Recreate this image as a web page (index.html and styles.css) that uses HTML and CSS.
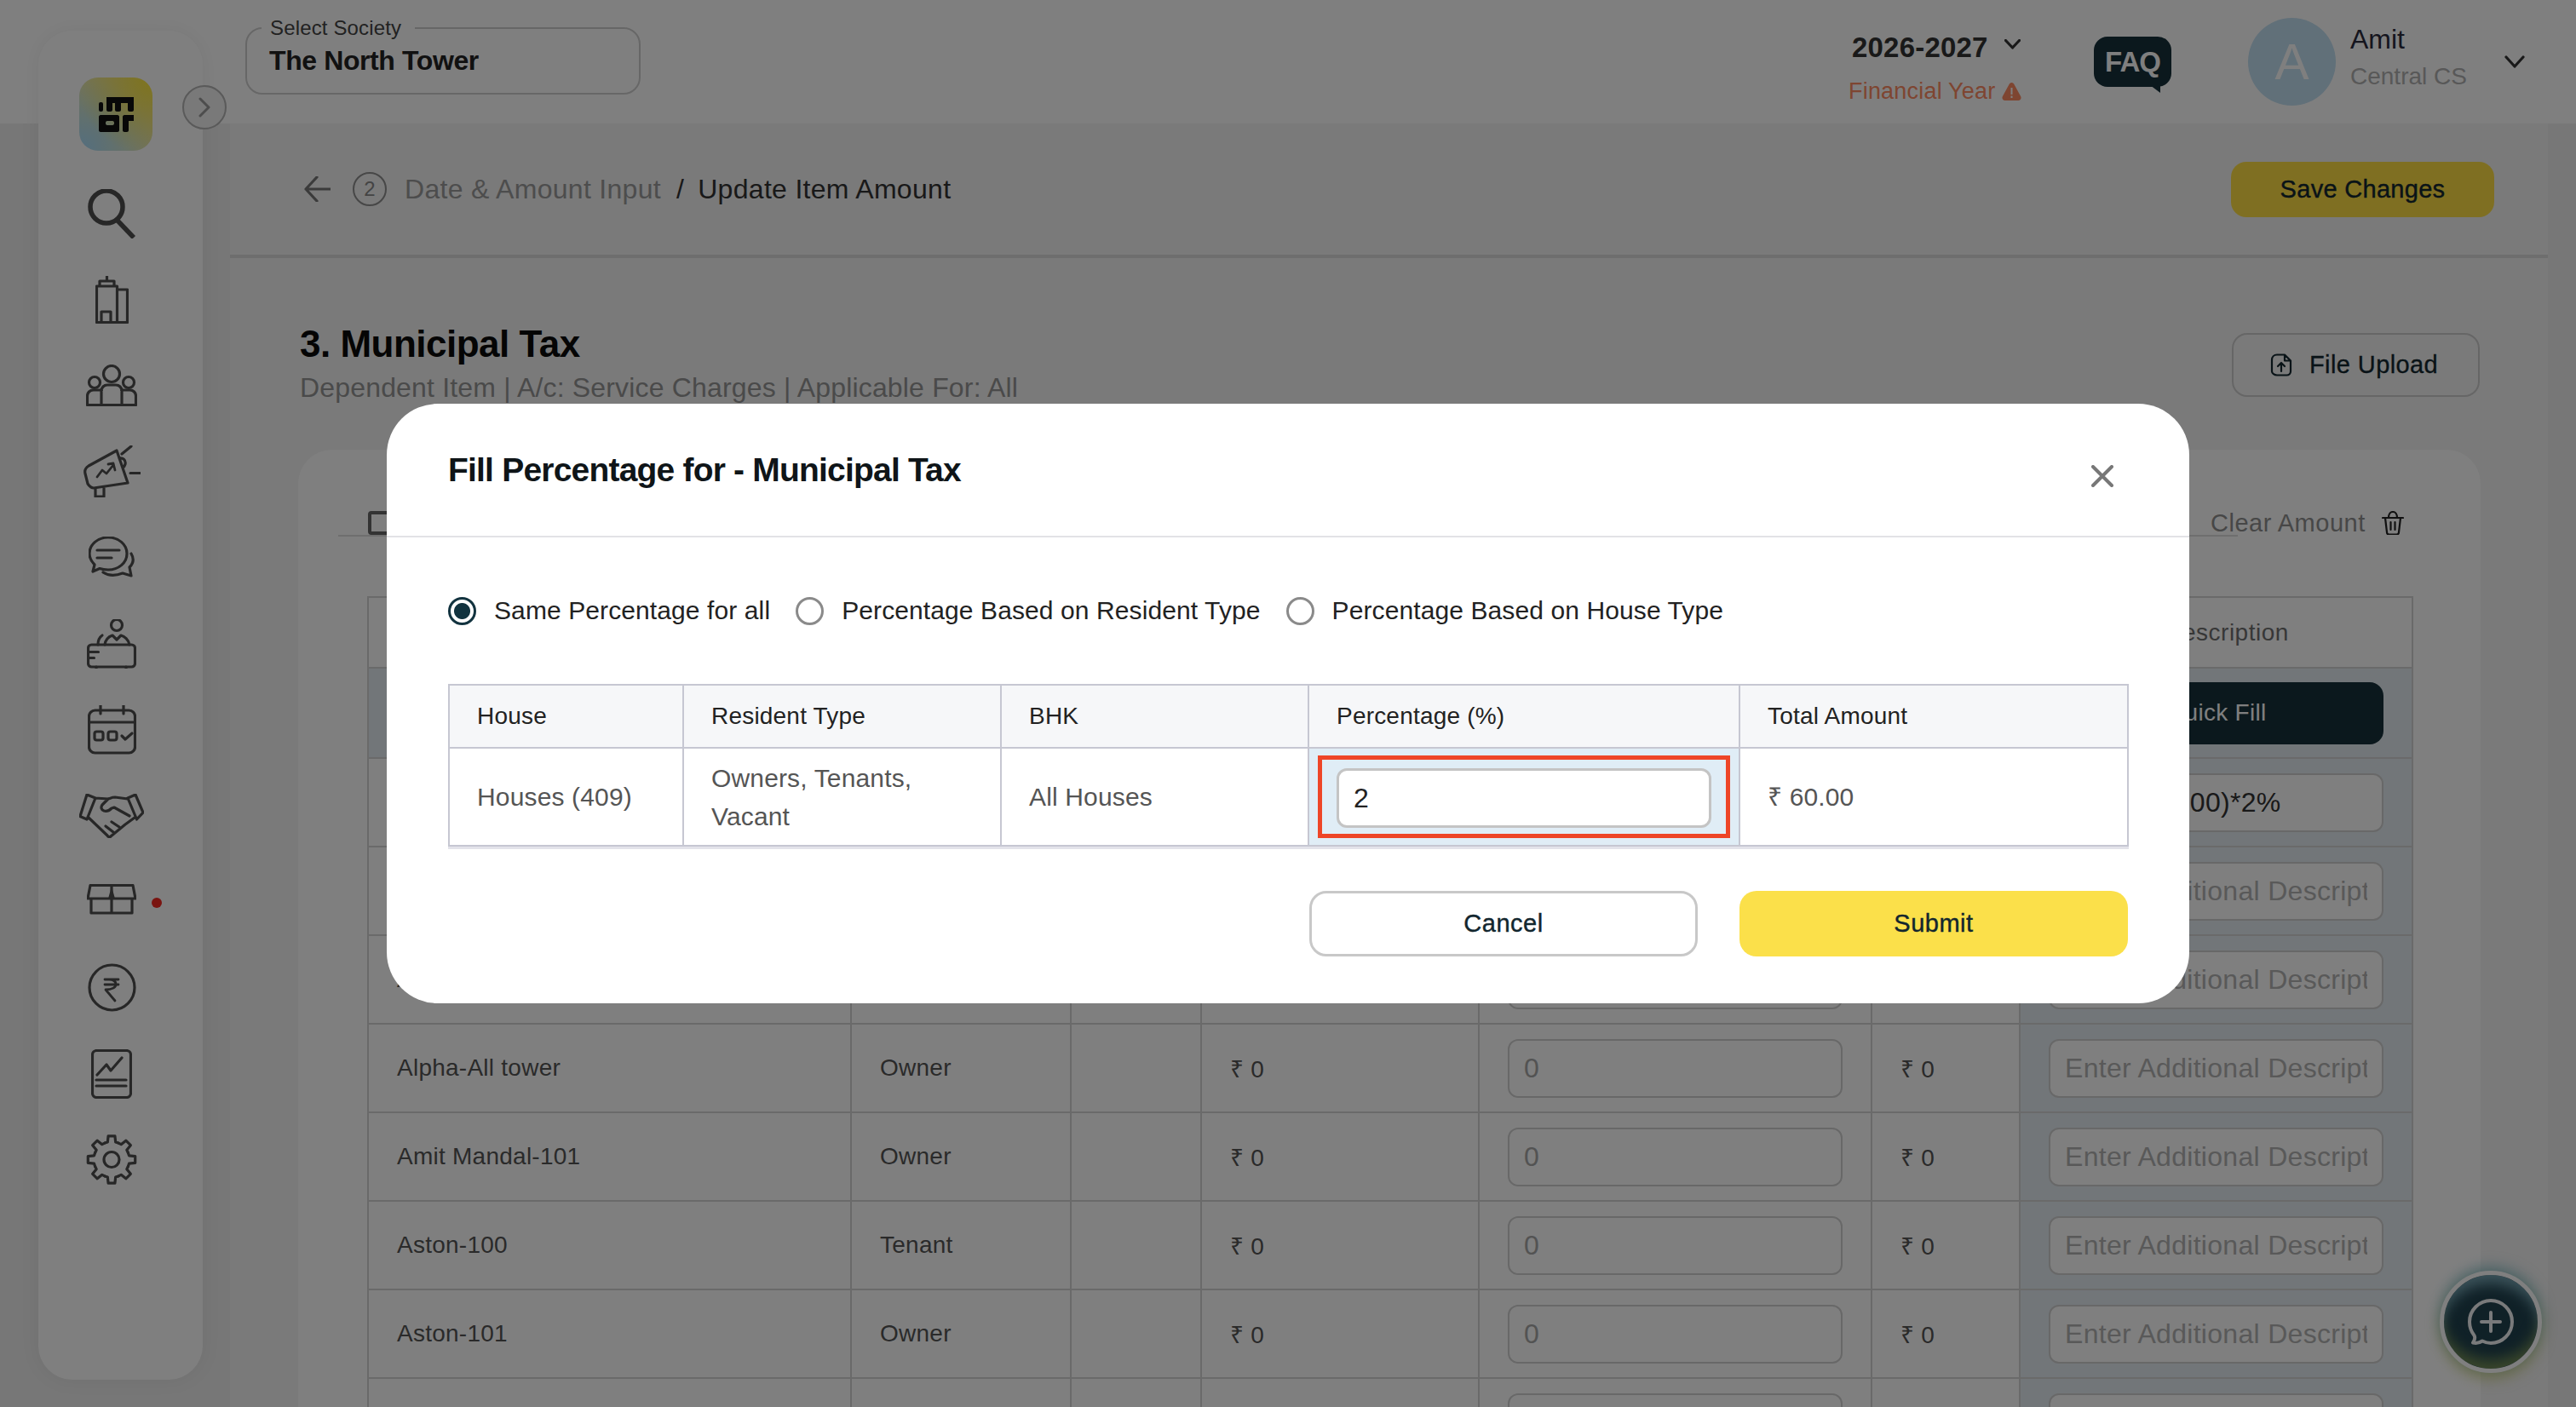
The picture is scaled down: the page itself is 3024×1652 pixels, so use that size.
FILE: index.html
```html
<!DOCTYPE html>
<html lang="en">
<head>
  <meta charset="UTF-8" />
  <title>Update Item Amount</title>
  <link rel="stylesheet" href="styles.css">
</head>
<body>

<div class="app">

  <!-- Top bar -->
  <header class="topbar">
    <fieldset class="society">
      <legend>Select Society</legend>
      <div class="society-name">The North Tower</div>
    </fieldset>

    <div class="year">
      <div class="year-row">
        <span class="year-value">2026-2027</span>
        <svg class="ico year-caret" width="19" height="12" viewBox="0 0 19 12"><path d="M1.500 1.500l8 8.500 8-8.500"/></svg>
      </div>
      <div class="year-note">
        <span>Financial Year</span>
        <svg width="23" height="21" viewBox="0 0 23 21"><path class="warn" d="M11.500 0c1.500 0 2.500 1 3.200 2.400l7.500 13.800c1 2.200-.2 4.800-3 4.800H3.800c-2.800 0-4-2.600-3-4.800L8.300 2.400C9 1 10 0 11.500 0z"/><path class="warn-mark" d="M10.500 6h2v8h-2zM10.500 15.500h2v2.500h-2z"/></svg>
      </div>
    </div>

    <div class="faq">FAQ</div>

    <div class="user">
      <div class="avatar">A</div>
      <div class="user-text">
        <div class="user-name">Amit</div>
        <div class="user-org">Central CS</div>
      </div>
      <svg class="ico user-caret" width="24" height="15" viewBox="0 0 24 15"><path d="M2 2l10 11L22 2"/></svg>
    </div>
  </header>

  <!-- Side rail -->
  <aside class="rail">
    <div class="logo">
      <svg width="41" height="41" viewBox="0 0 41 41">
        <rect x="0" y="6" width="5" height="11" rx="2"/>
        <path d="M9 0h32v15c0 1-1 2-2 2h-3c-1 0-2-1-2-2V7h-8v8c0 1-1 2-2 2h-3c-1 0-2-1-2-2V7h-3v8c0 1-1 2-2 2h-3c-1 0-2-1-2-2z"/>
        <path fill-rule="evenodd" d="M2 21h20c1 0 2 1 2 2v16c0 1-1 2-2 2H2c-1 0-2-1-2-2V23c0-1 1-2 2-2zM10 28c-1.500 0-2 1-2 2.500S8.500 33 10 33h6c1.500 0 2-1 2-2.500S17.500 28 16 28z"/>
        <path d="M30 21h11v7h-6v11c0 1-1 2-2 2h-3c-1 0-2-1-2-2V23c0-1 1-2 2-2z"/>
      </svg>
    </div>
    <button class="rail-toggle">
      <svg class="ico thin" width="15" height="24" viewBox="0 0 15 24"><path d="M2 2l10 10L2 22"/></svg>
    </button>

    <nav class="rail-nav">
      <a class="rail-item">
        <svg class="ico" width="57" height="58" viewBox="0 0 57 58"><circle class="heavy" cx="22" cy="21" r="19"/><path class="heavy" d="M35 37l19 20"/></svg>
      </a>
      <a class="rail-item">
        <svg class="ico" width="39" height="56" viewBox="0 0 39 56"><path d="M1.500 54.500V12h24v42.500M1.500 54.500h36V16h-12M5 12V6h17v6M13.500 0v6M7 54v-12h11v12"/></svg>
      </a>
      <a class="rail-item">
        <svg class="ico" width="60" height="49" viewBox="0 0 60 49"><circle cx="30" cy="11" r="9.500"/><circle cx="10" cy="21" r="6.500"/><circle cx="50" cy="21" r="6.500"/><path d="M1.500 47.500V37c0-4 3-7 7-7h10M58.500 47.500V37c0-4-3-7-7-7h-10M18 47.500V31c0-4 3-7 7-7h10c4 0 7 3 7 7v16.500M1.500 47.500h57"/></svg>
      </a>
      <a class="rail-item">
        <svg class="ico" width="67" height="61" viewBox="0 0 67 61"><path d="M39 6l13 38-40 6c-3 0-5-2-7-5l-3-12c-1-4 1-7 4-9zM14 50v10h10v-10M42 15c4-1 8 2 7 7-.5 2-1 3-3 4M45 10l11-9M55 32.500h12"/><path class="fine" d="M16 37l6-8 5 4 8-10M29 22l6-1 2 8"/></svg>
      </a>
      <a class="rail-item nudge-down">
        <svg class="ico" width="55" height="53" viewBox="0 0 55 53"><path d="M7 33c-4-4-6-8-6-13C1 9 11 1 23 1s22 8 22 19-10 19-22 19c-3 0-7-.5-10-1.500L5 41zM50 20c3 5 3 11-2 16l2 10-10-3c-8 3-17 3-23-1"/><path d="M10 16h26M10 25h17"/></svg>
      </a>
      <a class="rail-item">
        <svg class="ico" width="58" height="58" viewBox="0 0 58 58"><circle cx="35" cy="7" r="6.500"/><path d="M21 30c1-7 6-10 9-11l5 5 5-5c4 1 9 5 10 11M13 30c0-6 2-9 5-11"/><rect x="1.500" y="30" width="55" height="26" rx="4"/><path d="M1.500 38.500h12M1.500 45.500h7M11 56v2M46 56v2"/></svg>
      </a>
      <a class="rail-item">
        <svg class="ico" width="57" height="58" viewBox="0 0 57 58"><rect x="1.500" y="6" width="54" height="50" rx="7"/><path d="M1.500 20h54M15 0v10M42 0v10"/><rect x="8" y="31" width="10" height="10" rx="2.500"/><rect x="24" y="31" width="10" height="10" rx="2.500"/><path d="M40 36l4 4 8-7"/></svg>
      </a>
      <a class="rail-item">
        <svg class="ico" width="76" height="52" viewBox="0 0 76 52"><path d="M9 1l10 4-10 25-8-3.500zM57 5l9-4 9 21-7.500 8zM19 5l15 1c3-1 5-2 8-2l15 2M11 28l22 21c1 2 3 2 4 1l17-14 11-8M34 6l-7 7c-2 3-1 6 2 7 3 1 6 0 9-3l3-1 18 10M31 38l9 7M38 33l9 6"/></svg>
      </a>
      <a class="rail-item has-dot">
        <svg class="ico" width="58" height="36" viewBox="0 0 58 36"><path d="M4 1.500h50L57 17H1zM5 17v17h48V17M29 2v32"/><path class="solid" d="M29 3l-4 14h8z"/></svg>
        <span class="dot"></span>
      </a>
      <a class="rail-item">
        <svg class="ico" width="57" height="57" viewBox="0 0 57 57"><circle cx="28.500" cy="28.500" r="26.500"/><path class="fine" d="M20 19h16M20 25h16M25 19c6 0 8 3 8 6s-4 6-12 6l11 13"/></svg>
      </a>
      <a class="rail-item">
        <svg class="ico" width="48" height="58" viewBox="0 0 48 58"><rect x="1.500" y="1.500" width="45" height="55" rx="5"/><path d="M7 30l11-12 5 7 13-15M6 36h35M6 43h35"/></svg>
      </a>
      <a class="rail-item">
        <svg class="ico" width="60" height="59" viewBox="-30 -29.500 60 59">
          <circle r="9"/>
          <g id="tooth"><path d="M-8-19.400L-4.700-20.500-3.900-27.700H3.900L4.700-20.500 8-19.400"/></g>
          <use href="#tooth" transform="rotate(45)"/>
          <use href="#tooth" transform="rotate(90)"/>
          <use href="#tooth" transform="rotate(135)"/>
          <use href="#tooth" transform="rotate(180)"/>
          <use href="#tooth" transform="rotate(225)"/>
          <use href="#tooth" transform="rotate(270)"/>
          <use href="#tooth" transform="rotate(315)"/>
        </svg>
      </a>
    </nav>
  </aside>

  <!-- Page content -->
  <main class="main">
    <div class="crumbs">
      <svg class="ico crumb-back" width="31" height="30" viewBox="0 0 31 30"><path d="M31 15H2M15 1L2 15l13 14"/></svg>
      <span class="crumb-step">2</span>
      <span class="crumb-link">Date &amp; Amount Input</span>
      <span class="crumb-sep">/</span>
      <span class="crumb-now">Update Item Amount</span>
      <button class="btn-save">Save Changes</button>
    </div>

    <div class="head">
      <div>
        <h1>3. Municipal Tax</h1>
        <p>Dependent Item | A/c: Service Charges | Applicable For: All</p>
      </div>
      <button class="btn-upload">
        <svg class="ico upload" width="26" height="27" viewBox="0 0 26 27"><path d="M8 1.500h9l7 7V21c0 2.500-2 4.500-4.500 4.500h-11.500C5 25.500 2 23.500 2 21V7.500C2 4 4.500 1.500 8 1.500zM17 1.500v7h7M13 21V11M9 15l4-4 4 4"/></svg>
        File Upload
      </button>
    </div>

    <section class="card">
      <div class="card-top">
        <div class="card-tabs"><span class="check"></span></div>
        <div class="clear">
          Clear Amount
          <svg class="ico trash" width="26" height="28" viewBox="0 0 26 28"><path d="M1 8h24M4 8l2 17c0 1.500 1 2.500 2.500 2.500h9c1.500 0 2.500-1 2.500-2.500l2-17M8 8c0-4 2-7 5-7s5 3 5 7M10.500 13v9M15.500 13v9"/></svg>
        </div>
      </div>

      <table class="items">
        <colgroup>
          <col class="c-house"><col class="c-type"><col class="c-bhk"><col class="c-prev"><col class="c-input"><col class="c-total"><col class="c-desc">
        </colgroup>
        <thead>
          <tr>
            <th>House</th><th>Resident Type</th><th>BHK</th><th>Last Amount</th><th>Amount</th><th>Total</th><th>Additional Description</th>
          </tr>
        </thead>
        <tbody>
          <tr class="quick">
            <td></td><td></td><td></td><td></td><td></td><td></td>
            <td class="pad"><button class="btn-quick">Quick Fill</button></td>
          </tr>
          <tr>
            <td>Alpha-100</td><td>Owner</td><td></td><td>₹ 0</td>
            <td class="pad"><input class="field" value="0"></td><td>₹ 0</td>
            <td class="desc pad"><input class="field filled" value="(300000/100)*2%"></td>
          </tr>
          <tr>
            <td>Alpha-101</td><td>Owner</td><td></td><td>₹ 0</td>
            <td class="pad"><input class="field" value="0"></td><td>₹ 0</td>
            <td class="desc pad"><input class="field" placeholder="Enter Additional Description"></td>
          </tr>
          <tr>
            <td>Alpha-102</td><td>Owner</td><td></td><td>₹ 0</td>
            <td class="pad"><input class="field" value="0"></td><td>₹ 0</td>
            <td class="desc pad"><input class="field" placeholder="Enter Additional Description"></td>
          </tr>
          <tr>
            <td>Alpha-All tower</td><td>Owner</td><td></td><td>₹ 0</td>
            <td class="pad"><input class="field" value="0"></td><td>₹ 0</td>
            <td class="desc pad"><input class="field" placeholder="Enter Additional Description"></td>
          </tr>
          <tr>
            <td>Amit Mandal-101</td><td>Owner</td><td></td><td>₹ 0</td>
            <td class="pad"><input class="field" value="0"></td><td>₹ 0</td>
            <td class="desc pad"><input class="field" placeholder="Enter Additional Description"></td>
          </tr>
          <tr>
            <td>Aston-100</td><td>Tenant</td><td></td><td>₹ 0</td>
            <td class="pad"><input class="field" value="0"></td><td>₹ 0</td>
            <td class="desc pad"><input class="field" placeholder="Enter Additional Description"></td>
          </tr>
          <tr>
            <td>Aston-101</td><td>Owner</td><td></td><td>₹ 0</td>
            <td class="pad"><input class="field" value="0"></td><td>₹ 0</td>
            <td class="desc pad"><input class="field" placeholder="Enter Additional Description"></td>
          </tr>
          <tr class="cut">
            <td></td><td></td><td></td><td></td>
            <td class="pad"><input class="field" value=""></td><td></td>
            <td class="desc pad"><input class="field" value=""></td>
          </tr>
        </tbody>
      </table>
    </section>
  </main>

  <!-- Floating chat -->
  <button class="fab">
    <svg class="fab-ico" width="54" height="54" viewBox="0 0 54 54"><path d="M27 2c13.500 0 25 11 25 25S40.500 52 27 52c-4 0-7-1-10-2.500-3 2-7 3-11 2 2-3 3-6 1.500-8.500C4 38.500 2 33 2 27 2 13 13.500 2 27 2zM27 16v22M16 27h22"/></svg>
  </button>

  <!-- Dim layer and dialog -->
  <div class="overlay">
    <div class="modal">
      <div class="modal-head">
        <h2>Fill Percentage for - Municipal Tax</h2>
        <svg class="close" width="26" height="26" viewBox="0 0 26 26"><path d="M2 2l22 22M24 2L2 24"/></svg>
      </div>

      <div class="modal-body">
        <div class="radios">
          <span class="radio on"></span><span class="radio-label">Same Percentage for all</span>
          <span class="radio"></span><span class="radio-label">Percentage Based on Resident Type</span>
          <span class="radio"></span><span class="radio-label">Percentage Based on House Type</span>
        </div>

        <table class="fill">
          <colgroup>
            <col class="f-house"><col class="f-type"><col class="f-bhk"><col class="f-pct"><col class="f-total">
          </colgroup>
          <thead>
            <tr><th>House</th><th>Resident Type</th><th>BHK</th><th>Percentage (%)</th><th>Total Amount</th></tr>
          </thead>
          <tbody>
            <tr>
              <td>Houses (409)</td>
              <td>Owners, Tenants,<br>Vacant</td>
              <td>All Houses</td>
              <td class="pct">
                <div class="mark"><input class="pct-input" value="2"></div>
              </td>
              <td>₹ 60.00</td>
            </tr>
          </tbody>
        </table>

        <div class="actions">
          <button class="btn-cancel">Cancel</button>
          <button class="btn-submit">Submit</button>
        </div>
      </div>
    </div>
  </div>

</div>

</body>
</html>
```

FILE: styles.css
```css
* { box-sizing: border-box; }
html, body { margin: 0; padding: 0; }
body { font-family: "Liberation Sans", Arial, sans-serif; color: #222; }
button, input { font-family: inherit; }
h1, h2, p { margin: 0; }

.app {
  position: relative;
  width: 3024px;
  height: 1652px;
  overflow: hidden;
  background: #eeeeee;
}

/* icons */
.ico {
  display: block;
  fill: none;
  stroke: #4f4f4f;
  stroke-width: 3.2;
  stroke-linecap: round;
  stroke-linejoin: round;
}
.ico .heavy { stroke-width: 5.5; stroke-linecap: butt; }
.ico .fine { stroke-width: 2.8; }
.ico .solid { fill: #4f4f4f; stroke: none; }

/* top bar */
.topbar {
  height: 145px;
  background: #fff;
  display: flex;
  align-items: center;
  padding: 0 60px 0 288px;
}
.society {
  align-self: flex-start;
  margin: 19px 0 0;
  width: 464px;
  height: 92px;
  padding: 0 0 0 17px;
  border: 2px solid #cfcfcf;
  border-radius: 20px;
}
.society legend {
  padding: 0 16px 0 10px;
  font-size: 24px;
  line-height: 28px;
  letter-spacing: 0.15px;
  color: #444;
}
.society-name {
  margin-top: 4px;
  margin-left: 9px;
  font-size: 32px;
  line-height: 40px;
  font-weight: 700;
  letter-spacing: -0.4px;
  color: #222;
}
.year { margin-left: auto; padding-top: 11px; width: 204px; white-space: nowrap; }
.year-row { display: flex; align-items: center; padding-left: 4px; height: 44px; }
.year-value { font-size: 33px; font-weight: 700; letter-spacing: 0.2px; color: #333; }
.year-caret { margin-left: 19px; margin-top: -8px; stroke: #333; }
.year-note { display: flex; align-items: center; gap: 8px; margin-top: 14px; font-size: 27px; letter-spacing: 0.2px; color: #fc8a62; }
.warn { fill: #fc8a62; }
.warn-mark { fill: #fff; }
.faq {
  position: relative;
  margin-left: 84px;
  width: 91px;
  height: 59px;
  border-radius: 16px;
  background: #16303a;
  color: #fff;
  font-size: 33px;
  font-weight: 700;
  letter-spacing: -1px;
  line-height: 59px;
  text-align: center;
}
.faq::after {
  content: "";
  position: absolute;
  right: 13px;
  bottom: -7px;
  border-top: 9px solid #16303a;
  border-left: 12px solid transparent;
}
.user { display: flex; align-items: center; margin-left: 90px; }
.avatar {
  width: 103px;
  height: 103px;
  border-radius: 50%;
  background: #c2e0f2;
  color: #fff;
  font-size: 60px;
  line-height: 103px;
  text-align: center;
}
.user-text { margin-left: 17px; width: 136px; margin-top: -9px; white-space: nowrap; }
.user-name { font-size: 32px; line-height: 44px; color: #2b2b3c; }
.user-org { font-size: 28px; line-height: 44px; color: #b0b0b0; }
.user-caret { margin-left: 45px; stroke: #333; }

/* side rail */
.rail {
  position: absolute;
  left: 45px;
  top: 36px;
  width: 193px;
  height: 1584px;
  background: #fff;
  border-radius: 40px;
  box-shadow: 0 0 24px rgba(0,0,0,0.06);
}
.logo {
  position: absolute;
  left: 48px;
  top: 55px;
  width: 86px;
  height: 86px;
  border-radius: 22px;
  background:
    radial-gradient(circle at 100% 0%, #ffe838 0%, rgba(255,232,56,0) 75%),
    radial-gradient(circle at 0% 100%, #a6dcff 0%, rgba(166,220,255,0) 75%),
    #e8e6b0;
  display: flex;
  align-items: center;
  justify-content: center;
}
.logo svg { fill: #111; }
.rail-toggle {
  position: absolute;
  left: 169px;
  top: 64px;
  width: 52px;
  height: 52px;
  padding: 0;
  border-radius: 50%;
  border: 2px solid #b4b4b4;
  background: #f2f2f2;
  display: flex;
  align-items: center;
  justify-content: center;
}
.ico.thin { stroke: #9a9a9a; stroke-width: 3; }
.rail-nav {
  position: absolute;
  left: 0;
  top: 164px;
  width: 172px;
  display: grid;
  grid-auto-rows: 101px;
  justify-items: center;
  align-items: center;
}
.rail-item { position: relative; display: block; }
.rail-item.nudge-down { margin-top: 3px; }
.rail-item.has-dot { margin-top: -6px; }
.dot {
  position: absolute;
  left: 76px;
  top: 16px;
  width: 12px;
  height: 12px;
  border-radius: 50%;
  background: #f42820;
}

/* main */
.main { margin-left: 270px; width: 2721px; height: 1507px; background: #f4f4f4; }
.crumbs {
  height: 158px;
  border-bottom: 4px solid #dcdcdc;
  display: flex;
  align-items: center;
  padding: 0 63px 0 87px;
  font-size: 32px;
  letter-spacing: 0.3px;
}
.crumb-back { stroke: #777; margin-right: 26px; }
.crumb-step {
  width: 40px;
  height: 40px;
  border: 2px solid #8e8e8e;
  border-radius: 50%;
  font-size: 24px;
  line-height: 36px;
  text-align: center;
  color: #888;
  margin-right: 21px;
}
.crumb-link { color: #9a9a9a; }
.crumb-sep { margin: 0 16px 0 18px; color: #333; }
.crumb-now { color: #333; }
.btn-save {
  margin-left: auto;
  width: 309px;
  height: 65px;
  border: none;
  border-radius: 18px;
  background: #ffdf45;
  font-size: 29px;
  letter-spacing: 0.3px;
  color: #12262e;
  -webkit-text-stroke: 0.4px #12262e;
}

.head {
  display: flex;
  justify-content: space-between;
  align-items: flex-start;
  padding: 76px 80px 0 82px;
  height: 225px;
}
.head h1 { font-size: 44px; line-height: 50px; font-weight: 700; letter-spacing: -0.5px; color: #0a0a0a; }
.head p { margin-top: 3px; font-size: 32px; line-height: 46px; letter-spacing: 0.17px; color: #949494; }
.btn-upload {
  margin-top: 12px;
  width: 291px;
  height: 75px;
  border: 2px solid #cdcdcd;
  border-radius: 18px;
  background: transparent;
  display: flex;
  align-items: center;
  gap: 20px;
  padding: 0 0 0 43px;
  font-size: 29px;
  letter-spacing: 0.4px;
  color: #12262e;
  -webkit-text-stroke: 0.3px #12262e;
}
.ico.upload { stroke: #12262e; stroke-width: 2.2; }

.card {
  margin-left: 80px;
  width: 2562px;
  height: 1124px;
  background: #fff;
  border-radius: 40px 40px 0 0;
  padding: 0 81px;
}
.card-top { display: flex; margin: 0 0 70px -34px; height: 102px; }
.card-tabs { width: 2230px; height: 102px; border-bottom: 2px solid #dcdcdc; padding: 72px 0 0 35px; }
.check { display: block; width: 28px; height: 28px; border: 4px solid #666; border-radius: 4px; }
.clear {
  margin-left: -32px;
  display: flex;
  align-items: center;
  gap: 19px;
  height: 86px;
  margin-top: 43px;
  font-size: 29px;
  letter-spacing: 0.5px;
  color: #8f8f8f;
}
.ico.trash { stroke: #222; stroke-width: 2.2; }

/* table under the dialog */
.items { width: 2400px; table-layout: fixed; border-collapse: collapse; font-size: 28px; letter-spacing: 0.25px; color: #555; }
.c-house { width: 567px; }
.c-type { width: 258px; }
.c-bhk { width: 153px; }
.c-prev { width: 326px; }
.c-input { width: 461px; }
.c-total { width: 174px; }
.c-desc { width: 461px; }
.items th, .items td {
  border: 2px solid #d4d4d4;
  padding: 0 0 0 33px;
  text-align: left;
  font-weight: 400;
  height: 104px;
}
.items th { height: 83px; color: #6f6f6f; letter-spacing: 0.5px; }
.items .quick td { height: 106px; background: #e4ecf2; }
.items .desc { background: #e4ecf2; }
.items td.pad { padding: 0 33px; }
.field {
  display: block;
  width: 100%;
  height: 69px;
  padding: 0 17px;
  border: 2px solid #d0d0d0;
  border-radius: 12px;
  background: #fff;
  font-size: 32px;
  letter-spacing: 0.3px;
  color: #a6a6a6;
}
.field::placeholder { color: #b2b2b2; opacity: 1; }
.field.filled { color: #333; }
.btn-quick {
  width: 100%;
  height: 73px;
  border: none;
  border-radius: 16px;
  background: #16303a;
  color: #fff;
  font-size: 28px;
  letter-spacing: 0.3px;
}

/* floating chat */
.fab {
  position: absolute;
  right: 40px;
  bottom: 40px;
  width: 120px;
  height: 120px;
  padding: 0;
  border: 5px solid #fff;
  border-radius: 50%;
  background: #20424f;
  box-shadow:
    inset 0 16px 16px -6px rgba(140,190,205,0.8),
    inset 0 -16px 16px -6px rgba(170,190,90,0.6),
    0 -5px 16px rgba(90,170,190,0.6),
    0 7px 16px rgba(190,190,60,0.5);
  display: flex;
  align-items: center;
  justify-content: center;
}
.fab-ico { fill: none; stroke: #fff; stroke-width: 4; stroke-linecap: round; stroke-linejoin: round; opacity: 0.95; }

/* dialog */
.overlay {
  position: absolute;
  inset: 0;
  background: rgba(0,0,0,0.5);
  display: flex;
  align-items: center;
  justify-content: center;
}
.modal { width: 2116px; background: #fff; border-radius: 60px; }
.modal-head {
  height: 157px;
  border-bottom: 2px solid #e2e2e6;
  display: flex;
  align-items: center;
  justify-content: space-between;
  padding: 4px 89px 0 72px;
}
.modal-head h2 { font-size: 39px; line-height: 50px; font-weight: 700; letter-spacing: -0.8px; color: #0f1518; margin-top: -3px; }
.close { display: block; fill: none; stroke: #777; stroke-width: 4; stroke-linecap: round; margin-top: 10px; }
.modal-body { padding: 69px 72px 55px; }
.radios { display: flex; align-items: center; height: 34px; font-size: 30px; letter-spacing: 0.1px; color: #222; white-space: nowrap; }
.radio {
  flex: none;
  width: 33px;
  height: 33px;
  border: 3px solid #8a8a8a;
  border-radius: 50%;
  margin-right: 21px;
}
.radio.on { border-color: #12333f; background: radial-gradient(circle, #12333f 0 9px, #fff 10px); }
.radio-label { margin-right: 30px; }

.fill { width: 1971px; margin-top: 69px; table-layout: fixed; border-collapse: collapse; font-size: 28px; box-shadow: 0 3px 0 #e3e3ea; }
.f-house { width: 275px; }
.f-type { width: 373px; }
.f-bhk { width: 361px; }
.f-pct { width: 506px; }
.f-total { width: 456px; }
.fill th, .fill td { border: 2px solid #c6c7d2; text-align: left; padding: 0 0 0 32px; }
.fill th { height: 74px; background: #f6f7f9; font-weight: 400; letter-spacing: 0.2px; color: #222; }
.fill td { height: 115px; font-size: 30px; line-height: 45px; letter-spacing: 0.15px; color: #555; }
.fill td.pct { padding: 0; background: #e0edf6; }
.mark { margin: 0 10px; height: 97px; border: 5px solid #ee4527; padding: 10px 17px 0; }
.pct-input {
  display: block;
  width: 100%;
  height: 70px;
  padding: 0 17px;
  border: 3px solid #c4c4c4;
  border-radius: 12px;
  background: #fff;
  font-size: 32px;
  color: #222;
}

.actions { display: flex; justify-content: flex-end; gap: 49px; margin-top: 52px; }
.btn-cancel, .btn-submit {
  width: 456px;
  height: 77px;
  border-radius: 20px;
  font-size: 29px;
  letter-spacing: 0.5px;
  color: #12262e;
  -webkit-text-stroke: 0.4px #12262e;
}
.btn-cancel { background: #fff; border: 3px solid #c8c8c8; }
.btn-submit { background: #fbe04a; border: none; }
```
